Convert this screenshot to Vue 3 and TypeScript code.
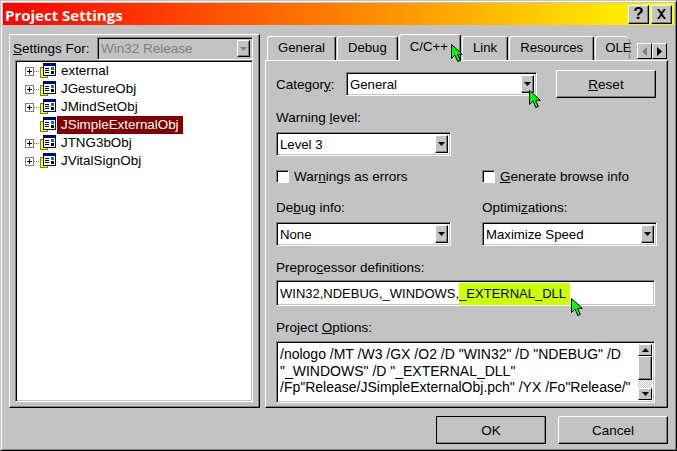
<script setup lang="ts">
interface TreeItem { name: string; expandable: boolean; selected: boolean }
const items: TreeItem[] = [
  { name: 'external', expandable: true, selected: false },
  { name: 'JGestureObj', expandable: true, selected: false },
  { name: 'JMindSetObj', expandable: true, selected: false },
  { name: 'JSimpleExternalObj', expandable: false, selected: true },
  { name: 'JTNG3bObj', expandable: true, selected: false },
  { name: 'JVitalSignObj', expandable: true, selected: false },
]
const tabs: string[] = ['General', 'Debug', 'C/C++', 'Link', 'Resources']
const cursors = [
  { x: 451, y: 44 },
  { x: 529, y: 90 },
  { x: 571, y: 298 },
]
</script>

<template>
  <div class="win">
    <header class="title">
      <span class="title-text">Project Settings</span>
      <div class="title-btns">
        <button class="cap">?</button>
        <button class="cap">
          <svg width="11" height="10" viewBox="0 0 11 10"><path d="M1 0h2l2.500 3L8 0h2L6.500 5 10 10H8L5.500 7 3 10H1l3.500-5z" fill="#000" /></svg>
        </button>
      </div>
    </header>

    <div class="main">
      <section class="left">
        <div class="for-row">
          <span class="for-label"><u>S</u>ettings For:</span>
          <div class="select disabled">
            <span class="value">Win32 Release</span>
            <span class="drop">
              <svg width="7" height="4" viewBox="0 0 7 4"><path d="M0 0h7L3.500 4z" fill="#808080" /></svg>
            </span>
          </div>
        </div>
        <div class="tree">
          <div v-for="it in items" :key="it.name" class="row">
            <span class="exp">
              <span v-if="it.expandable" class="plus"></span>
            </span>
            <span class="dots" :class="{ none: !it.expandable }"></span>
            <svg class="ico" width="16" height="16" viewBox="0 0 16 16">
              <rect x="0.500" y="4.500" width="7" height="10" fill="#ffff00" stroke="#808000" />
              <rect x="3.500" y="0.500" width="12" height="12" fill="#fff" stroke="#000080" />
              <rect x="3" y="0" width="13" height="3" fill="#000080" />
              <path d="M5 5.500h4M5 7.500h4M5 9.500h4" stroke="#000" />
              <rect x="11" y="4" width="3" height="3" fill="#008080" />
              <rect x="11" y="8" width="3" height="3" fill="#000" />
            </svg>
            <span class="name" :class="{ sel: it.selected }">{{ it.name }}</span>
          </div>
        </div>
      </section>

      <section class="right">
        <div class="strip">
          <div
            v-for="t in tabs"
            :key="t"
            class="tab"
            :class="{ active: t === 'C/C++' }"
          >{{ t }}</div>
          <div class="tab clipped">OLE</div>
          <svg class="wave" width="3" height="20" viewBox="0 0 3 20"><path d="M1 0l1 4-1 4 1 4-1 4 1 4" fill="none" stroke="#808080" /></svg>
          <div class="spin">
            <span class="spin-btn">
              <svg width="5" height="9" viewBox="0 0 5 9"><path d="M5 0v9L0 4.500z" fill="#808080" /></svg>
            </span>
            <span class="spin-btn">
              <svg width="5" height="9" viewBox="0 0 5 9"><path d="M0 0v9l5-4.500z" fill="#000" /></svg>
            </span>
          </div>
        </div>

        <div class="panel">
          <div class="cat-row">
            <span class="cat-label">Categor<u>y</u>:</span>
            <div class="select combo-cat">
              <span class="value">General</span>
              <span class="drop"><svg width="7" height="4" viewBox="0 0 7 4"><path d="M0 0h7L3.500 4z" /></svg></span>
            </div>
            <button class="btn reset"><u>R</u>eset</button>
          </div>

          <div class="lbl warn-lbl">Warning <u>l</u>evel:</div>
          <div class="select combo">
            <span class="value">Level 3</span>
            <span class="drop"><svg width="7" height="4" viewBox="0 0 7 4"><path d="M0 0h7L3.500 4z" /></svg></span>
          </div>

          <div class="two checks">
            <label class="check"><span class="box"></span><span>War<u>n</u>ings as errors</span></label>
            <label class="check"><span class="box"></span><span><u>G</u>enerate browse info</span></label>
          </div>

          <div class="two opts">
            <div class="lbl">De<u>b</u>ug info:</div>
            <div class="lbl">Optimi<u>z</u>ations:</div>
            <div class="select combo">
              <span class="value">None</span>
              <span class="drop"><svg width="7" height="4" viewBox="0 0 7 4"><path d="M0 0h7L3.500 4z" /></svg></span>
            </div>
            <div class="select combo">
              <span class="value">Maximize Speed</span>
              <span class="drop"><svg width="7" height="4" viewBox="0 0 7 4"><path d="M0 0h7L3.500 4z" /></svg></span>
            </div>
          </div>

          <div class="lbl pre-lbl">Prepro<u>c</u>essor definitions:</div>
          <div class="input">WIN32,NDEBUG,_WINDOWS,<span class="hl">_EXTERNAL_DLL</span></div>

          <div class="lbl opt-lbl">Project <u>O</u>ptions:</div>
          <div class="area">
            <div class="area-text">
              <span>/nologo /MT /W3 /GX /O2 /D "WIN32" /D "NDEBUG" /D</span>
              <span>"_WINDOWS" /D "_EXTERNAL_DLL"</span>
              <span>/Fp"Release/JSimpleExternalObj.pch" /YX /Fo"Release/"</span>
            </div>
            <div class="sb">
              <span class="sb-btn"><svg width="7" height="4" viewBox="0 0 7 4"><path d="M3.500 0L7 4H0z" /></svg></span>
              <span class="sb-thumb"></span>
              <span class="sb-track"></span>
              <span class="sb-btn"><svg width="7" height="4" viewBox="0 0 7 4"><path d="M0 0h7L3.500 4z" /></svg></span>
            </div>
          </div>
        </div>
      </section>
    </div>

    <footer class="foot">
      <div class="default-wrap"><button class="btn foot-btn">OK</button></div>
      <button class="btn foot-btn">Cancel</button>
    </footer>

    <svg
      v-for="(c, i) in cursors"
      :key="i"
      class="cursor"
      :style="{ left: c.x + 'px', top: c.y + 'px' }"
      width="12"
      height="19"
      viewBox="0 0 12 19"
    >
      <path d="M.5.500v14l3.500-3.500 2.700 6.500 2.600-1-2.700-6.200h4.700z" fill="#00ff00" stroke="#000" stroke-width="1" />
    </svg>
  </div>
</template>

<style scoped>
.win {
  position: relative;
  width: 677px;
  height: 451px;
  box-sizing: border-box;
  padding: 2px;
  background: #c3c3c3;
  border: 1px solid;
  border-color: #c3c3c3 #000 #000 #c3c3c3;
  box-shadow: inset 1px 1px 0 #fff, inset -1px -1px 0 #808080;
  font-family: "Liberation Sans", Arial, sans-serif;
  font-size: 13.5px;
  color: #000;
  overflow: hidden;
}
.title {
  height: 22px;
  display: flex;
  align-items: center;
  justify-content: space-between;
  background: linear-gradient(90deg, #ff0000, #ffff00);
  padding: 0 2px;
}
.title-text {
  font-family: "Open Sans", sans-serif;
  font-weight: 700;
  font-size: 15px;
  line-height: 22px;
  padding-top: 1px;
  color: #fff;
}
.title-btns { display: flex; gap: 2px; }
.cap {
  width: 21px;
  height: 19px;
  padding: 0;
  display: flex;
  align-items: center;
  justify-content: center;
  background: #c3c3c3;
  border: 1px solid;
  border-color: #fff #000 #000 #fff;
  box-shadow: inset -1px -1px 0 #808080;
  font: 700 17px "Liberation Sans", sans-serif;
  color: #000;
}
.main {
  display: flex;
  gap: 5px;
  margin: 9px 0 0 6px;
  height: 374px;
}
.left {
  width: 251px;
  box-sizing: border-box;
  display: flex;
  flex-direction: column;
  padding: 2px 6px 5px 3px;
  border: 1px solid;
  border-color: #fff #000 #000 #fff;
  box-shadow: inset -1px -1px 0 #808080;
}
.for-row { display: flex; align-items: center; height: 23px; }
.for-label { width: 84px; flex: none; color: #000; }
.select {
  box-sizing: border-box;
  display: flex;
  align-items: center;
  justify-content: space-between;
  background: #fff;
  border: 1px solid;
  border-color: #808080 #fff #fff #808080;
  box-shadow: inset 1px 1px 0 #000, inset -1px -1px 0 #c3c3c3;
  padding: 2px;
  font-size: 13.2px;
}
.select .value { padding-left: 1px; white-space: nowrap; }
.drop {
  box-sizing: border-box;
  width: 13px;
  align-self: stretch;
  flex: none;
  display: flex;
  align-items: center;
  justify-content: center;
  background: #c3c3c3;
  border: 1px solid;
  border-color: #fff #000 #000 #fff;
  box-shadow: inset -1px -1px 0 #808080;
}
.disabled { flex: 1; height: 23px; background: #c3c3c3; color: #808080; font-size: 13.5px; }
.tree {
  flex: 1;
  margin-left: 2px;
  box-sizing: border-box;
  background: #fff;
  border: 1px solid;
  border-color: #808080 #fff #fff #808080;
  box-shadow: inset 1px 1px 0 #000, inset -1px -1px 0 #c3c3c3;
  padding: 1px 0 0 9px;
}
.row { display: flex; align-items: center; height: 18px; }
.exp { width: 9px; height: 9px; flex: none; }
.plus {
  display: block;
  width: 9px;
  height: 9px;
  box-sizing: border-box;
  border: 1px solid #808080;
  background:
    linear-gradient(#000, #000) center / 5px 1px no-repeat,
    linear-gradient(#000, #000) center / 1px 5px no-repeat,
    #fff;
}
.dots {
  width: 6px;
  margin-right: 0;
  height: 1px;
  flex: none;
  background: repeating-linear-gradient(90deg, #808080 0 1px, transparent 1px 2px);
}
.dots.none { background: none; }
.ico { flex: none; margin-left: 0; }
.name {
  margin-left: 1px;
  padding: 0 4px;
  line-height: 18px;
  height: 18px;
  white-space: nowrap;
  font-size: 13.4px;
}
.name.sel { background: #800000; color: #fff; }
.right {
  width: 403px;
  display: flex;
  flex-direction: column;
}
.strip {
  height: 26px;
  display: flex;
  align-items: flex-end;
  gap: 1px;
  padding-left: 2px;
  position: relative;
  z-index: 1;
  box-sizing: border-box;
}
.tab {
  box-sizing: border-box;
  height: 24px;
  padding: 2px 10px 0;
  line-height: 18px;
  font-size: 13.2px;
  background: #c3c3c3;
  border: 1px solid;
  border-color: #fff #000 transparent #fff;
  border-bottom: 0;
  border-radius: 3px 3px 0 0;
  box-shadow: inset -1px 0 0 #808080;
  white-space: nowrap;
}
.tab.active {
  height: 27px;
  margin-bottom: -1px;
  padding: 3px 12px 0 10px;
}
.clipped {
  width: 33px;
  padding: 2px 0 0 9px;
  border-right: 0;
  box-shadow: none;
}
.wave { margin: 0 0 1px -1px; flex: none; }
.spin {
  display: flex;
  position: absolute;
  left: 372px;
  top: 9px;
}
.spin-btn {
  box-sizing: border-box;
  width: 15px;
  height: 16px;
  display: flex;
  align-items: center;
  justify-content: center;
  background: #c3c3c3;
  border: 1px solid;
  border-color: #fff #000 #000 #fff;
}
.panel {
  flex: 1;
  box-sizing: border-box;
  padding: 9px 0 0 10px;
  border: 1px solid;
  border-color: #fff #000 #000 #fff;
  box-shadow: inset -1px -1px 0 #808080;
}
.cat-row { display: flex; align-items: center; height: 28px; }
.cat-label { width: 70px; flex: none; }
.combo-cat { width: 191px; height: 24px; }
.reset { width: 100px; height: 28px; margin-left: 19px; font-size: 14px; }
.btn {
  box-sizing: border-box;
  padding: 0;
  background: #c3c3c3;
  border: 1px solid;
  border-color: #fff #000 #000 #fff;
  box-shadow: inset -1px -1px 0 #808080;
  font: inherit;
  color: #000;
}
.lbl { height: 16px; line-height: 16px; }
.warn-lbl { margin: 12px 0 6px; }
.combo { width: 175px; height: 24px; }
.two {
  display: grid;
  grid-template-columns: 206px 175px;
}
.checks { margin-top: 13px; height: 14px; align-items: center; }
.check { display: flex; align-items: center; gap: 5px; white-space: nowrap; }
.box {
  box-sizing: border-box;
  width: 13px;
  height: 13px;
  background: #fff;
  border: 1px solid;
  border-color: #808080 #fff #fff #808080;
  box-shadow: inset 1px 1px 0 #000;
}
.opts { margin-top: 17px; row-gap: 6px; }
.pre-lbl { margin: 14px 0 4px; }
.input {
  box-sizing: border-box;
  width: 379px;
  height: 26px;
  padding: 2px 0 2px 3px;
  line-height: 22px;
  font-size: 13px;
  background: #fff;
  border: 1px solid;
  border-color: #808080 #fff #fff #808080;
  box-shadow: inset 1px 1px 0 #000, inset -1px -1px 0 #c3c3c3;
  white-space: nowrap;
}
.hl { display: inline-block; background: #ccff00; padding-right: 4px; height: 22px; }
.opt-lbl { margin: 14px 0 5px; }
.area {
  box-sizing: border-box;
  width: 379px;
  height: 62px;
  display: flex;
  padding: 2px;
  background: #fff;
  border: 1px solid;
  border-color: #808080 #fff #fff #808080;
  box-shadow: inset 1px 1px 0 #000, inset -1px -1px 0 #c3c3c3;
}
.area-text {
  flex: 1;
  min-width: 0;
  padding: 2px 0 0 1px;
  line-height: 16.5px;
  font-size: 14px;
}
.area-text span { display: block; white-space: nowrap; }
.sb { width: 14px; display: flex; flex-direction: column; flex: none; }
.sb-btn {
  box-sizing: border-box;
  height: 12px;
  display: flex;
  align-items: center;
  justify-content: center;
  background: #c3c3c3;
  border: 1px solid;
  border-color: #fff #000 #000 #fff;
}
.sb-thumb {
  box-sizing: border-box;
  height: 24px;
  background: #c3c3c3;
  border: 1px solid;
  border-color: #fff #000 #000 #fff;
  box-shadow: inset -1px -1px 0 #808080;
}
.sb-track {
  flex: 1;
  background: repeating-conic-gradient(#fff 0 25%, #c3c3c3 0 50%) 0 0 / 2px 2px;
}
.foot {
  display: flex;
  justify-content: flex-end;
  gap: 12px;
  margin-top: 8px;
  padding-right: 6px;
}
.foot-btn { width: 110px; height: 28px; display: block; }
.default-wrap { display: flex; outline: 1px solid #000; outline-offset: -1px; }
.cursor { position: absolute; z-index: 5; margin: -1px 0 0 -1px; }
</style>
